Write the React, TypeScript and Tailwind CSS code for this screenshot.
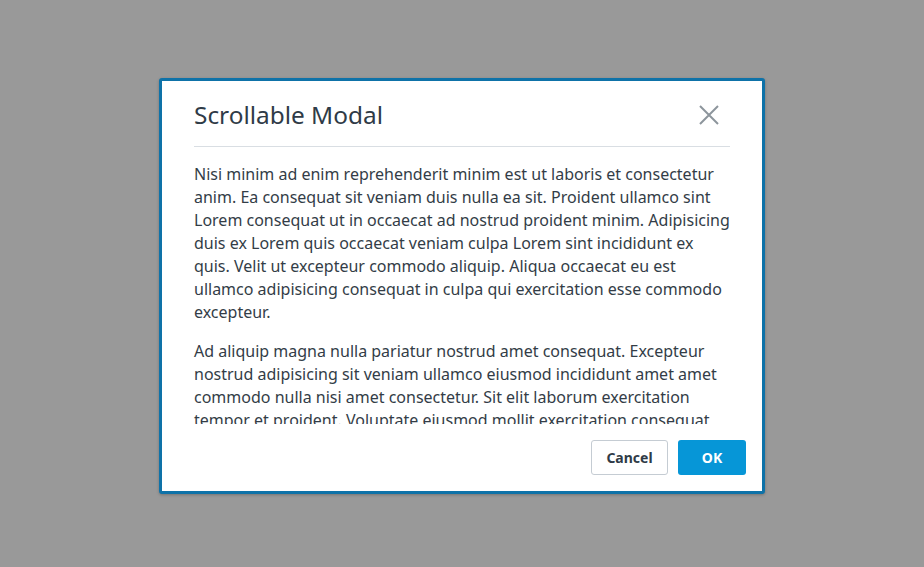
import React from 'react'

const paragraphs = [
  'Nisi minim ad enim reprehenderit minim est ut laboris et consectetur anim. Ea consequat sit veniam duis nulla ea sit. Proident ullamco sint Lorem consequat ut in occaecat ad nostrud proident minim. Adipisicing duis ex Lorem quis occaecat veniam culpa Lorem sint incididunt ex quis. Velit ut excepteur commodo aliquip. Aliqua occaecat eu est ullamco adipisicing consequat in culpa qui exercitation esse commodo excepteur.',
  'Ad aliquip magna nulla pariatur nostrud amet consequat. Excepteur nostrud adipisicing sit veniam ullamco eiusmod incididunt amet amet commodo nulla nisi amet consectetur. Sit elit laborum exercitation tempor et proident. Voluptate eiusmod mollit exercitation consequat ullamco nisi aliquip. Labore cillum sunt eu non commodo ut duis.',
  'Occaecat enim aliqua sunt anim ipsum culpa cillum officia. Est ut deserunt minim dolor aliqua cupidatat commodo esse magna fugiat eiusmod.',
]

const CloseIcon = () => (
  <svg width="24" height="24" viewBox="0 0 24 24" fill="none">
    <path
      d="M3 3L21 21M21 3L3 21"
      stroke="#8d959c"
      strokeWidth="2"
      strokeLinecap="butt"
    />
  </svg>
)

const App = () => {
  return (
    <div
      className="flex h-[567px] w-full justify-center bg-[#999999] pt-[78px]"
      style={{ fontFamily: '"Noto Sans", "Open Sans", sans-serif' }}
    >
      <div className="flex h-[416px] w-[606px] flex-col rounded-[3px] border-[3px] border-[#0e72a8] bg-white shadow-[0_1px_3px_rgba(0,0,0,0.25)]">
        <div className="mx-8 flex h-[66px] shrink-0 items-end justify-between border-b border-[#d9dee3] pb-4">
          <h1 className="text-[24.4px] leading-[30px] text-[#2f3b47]">
            Scrollable Modal
          </h1>
          <button className="mb-[3px] mr-[9px] flex h-6 w-6 items-center justify-center">
            <CloseIcon />
          </button>
        </div>
        <div className="h-[277px] shrink-0 overflow-hidden px-8 pt-4">
          {paragraphs.map((text, index) => (
            <p
              key={index}
              className="mb-4 text-[16px] leading-[23px] text-[#333d47]"
            >
              {text}
            </p>
          ))}
        </div>
        <div className="flex flex-1 items-start justify-end gap-[10px] pr-4 pt-4">
          <button className="h-[35px] w-[77px] rounded-[3px] border border-[#c5ccd3] bg-white text-[14px] font-bold text-[#2f3b47]">
            Cancel
          </button>
          <button className="h-[35px] w-[68px] rounded-[3px] bg-[#0696d7] text-[14px] font-bold text-white">
            OK
          </button>
        </div>
      </div>
    </div>
  )
}

export default App
